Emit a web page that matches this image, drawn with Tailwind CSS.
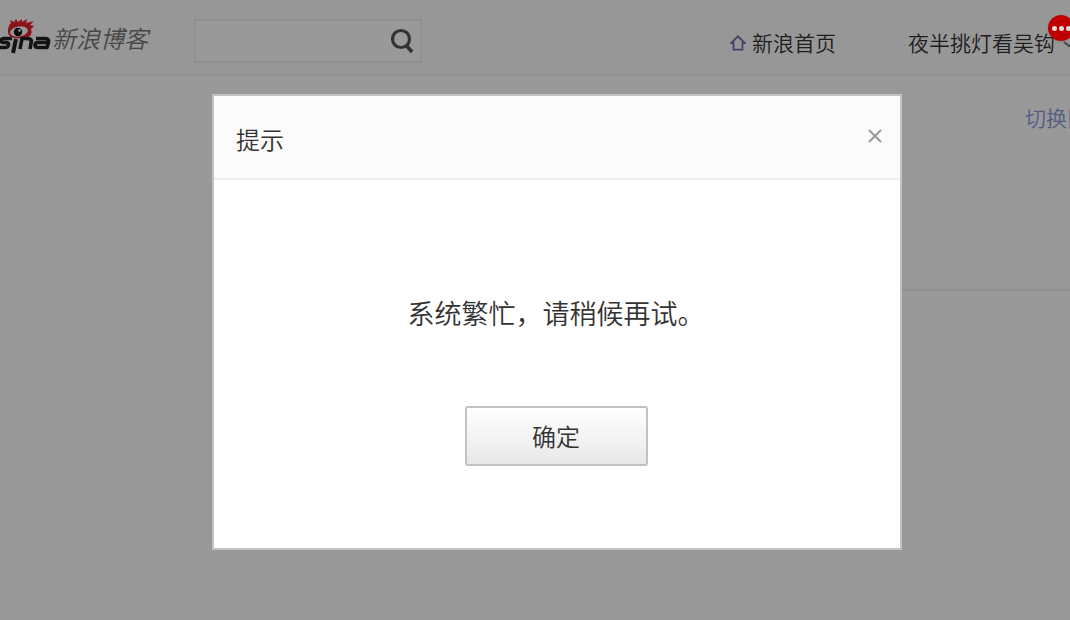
<!DOCTYPE html>
<html lang="zh-CN">
<head>
<meta charset="utf-8">
<title>新浪博客</title>
<script src="https://cdn.jsdelivr.net/npm/@tailwindcss/browser@4"></script>
</head>
<body class="min-h-screen overflow-hidden bg-white font-['Noto_Sans_CJK_SC_DemiLight','Noto_Sans_CJK_SC',sans-serif] font-[350] text-[#333]">
<header class="flex h-[76px] items-start overflow-hidden border-b-2 border-[#f4f4f4] bg-[#fcfcfc] whitespace-nowrap">
  <a href="#" aria-label="新浪博客" class="mt-[18px] flex shrink-0">
    <svg width="52" height="40" viewBox="0 0 52 40" role="img" aria-label="sina">
      <path d="M8 14C8 9 9 7 11 5l-1-3 4 2 2-3 2 3 4-3v3l5-3-1 4 8-2-4 4 4 1-3 3c2 6-2 9-7 9-8 1-16 0-16-6z" fill="#e8202a"/>
      <ellipse cx="19" cy="13.500" rx="9" ry="5" fill="#fcfcfc" transform="rotate(-10 19 13.500)"/>
      <circle cx="18" cy="14" r="4.200" fill="#111"/>
      <circle cx="19.500" cy="12.500" r="1.300" fill="#fff"/>
      <g fill="none" stroke="#222" stroke-width="3.600" stroke-linejoin="round" transform="translate(0 1)">
        <path d="M12 19.500H4c-4 0-4 4 0 4h2c4 0 3 5-1 5H-2"/>
        <path d="M16 20l-3 14" stroke-width="4"/>
        <path d="M20 30l2-10.500h5c4 0 5 1 4 5l-1 5.500"/>
        <path d="M36 19.500h9c3 0 4 1 3.500 4L47 28.500H38c-4 0-4-5 0-5h9"/>
      </g>
    </svg>
    <span class="text-[24px] leading-10 font-medium italic text-[#777]">新浪博客</span>
  </a>
  <form class="mt-[19px] ml-[46px] flex h-11 w-[228px] shrink-0 items-center border-2 border-[#f0f0f0] bg-white">
    <input type="text" aria-label="搜索" class="h-full min-w-0 flex-1 px-3 text-lg outline-none">
    <button type="button" aria-label="搜索按钮" class="mr-0.5 p-1">
      <svg width="24" height="26" viewBox="0 0 24 26" fill="none" stroke="#555"><circle cx="11" cy="11" r="8.500" stroke-width="3.200"/><path d="M16 17l6 7" stroke-width="3.600"/></svg>
    </button>
  </form>
  <nav class="mt-[26px] ml-auto flex text-[21px] leading-8">
    <a href="#" class="flex items-center gap-1.5">
      <svg class="mt-0.5" width="16" height="16" viewBox="0 0 18 18" fill="none" stroke="#7070b0" stroke-width="2"><path d="M1.500 9L9 1.500 16.500 9H14v7.500H4V9z"/></svg>新浪首页</a>
    <a href="#" class="ml-[72px]">夜半挑灯看吴钩</a>
    <svg class="mt-3.5 ml-2 w-[7px]" height="8" viewBox="0 0 7 8" fill="none" stroke="#777" stroke-width="2"><path d="M1 2l5 4 5-4"/></svg>
  </nav>
</header>
<main>
  <div class="ml-[212px] flex h-[215px] items-start justify-end overflow-hidden border-b-2 border-[#eee] pt-[25px]">
    <a href="#" class="-mr-[39px] text-[21px] leading-8 text-[#8c9cdc] whitespace-nowrap">切换旧版</a>
  </div>
</main>
<div class="fixed inset-0 bg-black/40"></div>
<div class="fixed top-[15px] -right-1 flex size-[26px] items-center justify-center gap-0.5 rounded-full bg-[#c00000] shadow">
  <i class="size-[5px] rounded-full bg-[#ddd]"></i><i class="size-[5px] rounded-full bg-[#ddd]"></i><i class="size-[5px] rounded-full bg-[#ddd]"></i>
</div>
<div class="fixed inset-x-0 top-[94px] flex justify-center pl-11">
  <section role="dialog" aria-modal="true" aria-labelledby="t" class="w-[690px] border-2 border-[#c2c2c2] bg-white">
    <div class="flex h-[84px] items-start justify-between border-b-2 border-[#eee] bg-[#fbfbfb] pt-[23px] pr-[18px] pl-[22px]">
      <h2 id="t" class="text-[24px] leading-10">提示</h2>
      <button type="button" aria-label="关闭" class="mt-[10px]"><svg width="14" height="14" viewBox="0 0 14 14" stroke="#999" stroke-width="2"><path d="M1 1l12 12M13 1L1 13"/></svg></button>
    </div>
    <div class="flex flex-col items-center pt-[111px] pr-0.5 pb-[82px]">
      <p class="text-[27px] leading-11">系统繁忙，请稍候再试。</p>
      <button type="button" class="mt-[71px] h-15 w-[183px] rounded-[3px] border-2 border-[#c2c2c2] bg-linear-to-b from-white to-[#e8e8e8] text-[24px]">确定</button>
    </div>
  </section>
</div>
</body>
</html>
